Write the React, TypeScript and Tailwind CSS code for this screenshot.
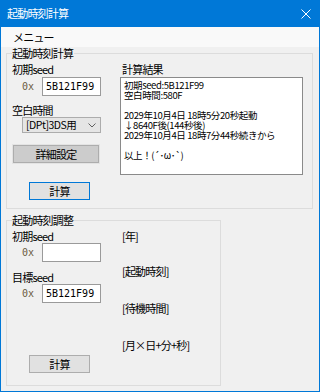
import React from 'react';

const ui = { fontFamily: '"Noto Sans CJK JP", "Noto Sans", sans-serif' };
const mono = { fontFamily: '"DejaVu Sans Mono", "Liberation Mono", monospace' };

const Group: React.FC<{ title: string; className: string; children: React.ReactNode }> = ({ title, className, children }) => (
    <div className={`relative border border-[#dcdcdc] ${className}`}>
        <span className="absolute -top-[7px] left-[5px] bg-[#f0f0f0] pr-[1px] text-[11px] leading-[12px] tracking-[-0.8px] text-black">{title}</span>
        {children}
    </div>
);

const HexInput: React.FC<{ value: string }> = ({ value }) => (
    <div className="flex items-center h-[19px]">
        <span className="w-[30px] pl-[10px] text-[10px] text-[#6b5b3e]" style={mono}>0x</span>
        <div className="w-[59px] h-[19px] bg-white border border-[#9a9a9a] flex items-center pl-[3px] text-[10px] text-black" style={mono}>
            {value}
        </div>
    </div>
);

const Label: React.FC<{ children: React.ReactNode; className?: string }> = ({ children, className = '' }) => (
    <div className={`text-[11px] leading-[12px] tracking-[-0.8px] text-black ${className}`}>{children}</div>
);

export default function App() {
    const result = [
        '初期seed:5B121F99',
        '空白時間:580F',
        '',
        '2029年10月4日 18時5分20秒起動',
        '↓8640F後(144秒後)',
        '2029年10月4日 18時7分44秒続きから',
        '',
        '以上！(´･ω･`)',
    ];

    return (
        <div className="w-[320px] h-[392px] bg-[#0078d7] px-[1px] pb-[1px] flex flex-col" style={ui}>
            {/* Title bar */}
            <div className="h-[27px] flex items-center justify-between pl-[6px] pr-[8px] shrink-0">
                <span className="text-[11px] tracking-[-0.8px] text-white">起動時刻計算</span>
                <svg width="10" height="10" viewBox="0 0 10 10" className="text-white">
                    <path d="M0.5 0.5 L9.5 9.5 M9.5 0.5 L0.5 9.5" stroke="currentColor" strokeWidth="1" />
                </svg>
            </div>

            {/* Menu bar */}
            <div className="h-[20px] bg-[#f9f9f9] flex items-center pl-[12px] shrink-0">
                <span className="text-[11px] tracking-[-0.8px] text-black">メニュー</span>
            </div>

            {/* Client */}
            <div className="flex-1 bg-[#f0f0f0] pl-[5px] pt-[6px]">
                <Group title="起動時刻計算" className="w-[307px] h-[156px]">
                    <div className="flex pt-[9px] pl-[5px]">
                        <div className="w-[96px] flex flex-col">
                            <Label>初期seed</Label>
                            <div className="mt-[2px]"><HexInput value="5B121F99" /></div>
                            <Label className="mt-[8px]">空白時間</Label>
                            <div className="mt-[1px] ml-[10px] w-[79px] h-[16px] bg-[#e5e5e5] border border-[#acacac] flex items-center justify-between pl-[3px] pr-[4px]">
                                <span className="text-[10.5px] tracking-[-0.5px] text-black">[DPt]3DS用</span>
                                <svg width="8" height="5" viewBox="0 0 8 5">
                                    <path d="M0.5 0.5 L4 4 L7.5 0.5" stroke="#606060" fill="none" strokeWidth="1" />
                                </svg>
                            </div>
                            <button className="mt-[12px] ml-[1px] w-[86px] h-[18px] bg-[#cccccc] border border-[#adadad] outline outline-1 outline-[#e3e3e3] text-[11px] tracking-[-0.8px] text-black flex items-center justify-center">
                                詳細設定
                            </button>
                            <button className="mt-[19px] ml-[17px] w-[61px] h-[18px] bg-[#e1e1e1] border border-[#0078d7] text-[11px] tracking-[-0.8px] text-black flex items-center justify-center">
                                計算
                            </button>
                        </div>
                        <div className="ml-[12px] w-[183px] flex flex-col">
                            <Label className="ml-[2px]">計算結果</Label>
                            <div className="mt-[2px] h-[98px] bg-white border border-[#8a8a8a] pl-[3px] pt-[2px]">
                                {result.map((line, i) => (
                                    <div key={i} className="h-[10px] text-[9.5px] leading-[10px] tracking-[-0.4px] text-black whitespace-pre">
                                        {line}
                                    </div>
                                ))}
                            </div>
                        </div>
                    </div>
                </Group>

                <Group title="起動時刻調整" className="mt-[11px] w-[215px] h-[166px]">
                    <div className="flex pt-[9px] pl-[5px]">
                        <div className="w-[96px] flex flex-col">
                            <Label>初期seed</Label>
                            <div className="mt-[1px]"><HexInput value="" /></div>
                            <Label className="mt-[9px]">目標seed</Label>
                            <div className="mt-[1px]"><HexInput value="5B121F99" /></div>
                            <button className="mt-[52px] ml-[17px] w-[61px] h-[18px] bg-[#e1e1e1] border border-[#adadad] text-[11px] tracking-[-0.8px] text-black flex items-center justify-center">
                                計算
                            </button>
                        </div>
                        <div className="ml-[14px] flex flex-col">
                            <Label>[年]</Label>
                            <Label className="mt-[23px]">[起動時刻]</Label>
                            <Label className="mt-[25px]">[待機時間]</Label>
                            <Label className="mt-[25px]">[月×日+分+秒]</Label>
                        </div>
                    </div>
                </Group>
            </div>
        </div>
    );
}
